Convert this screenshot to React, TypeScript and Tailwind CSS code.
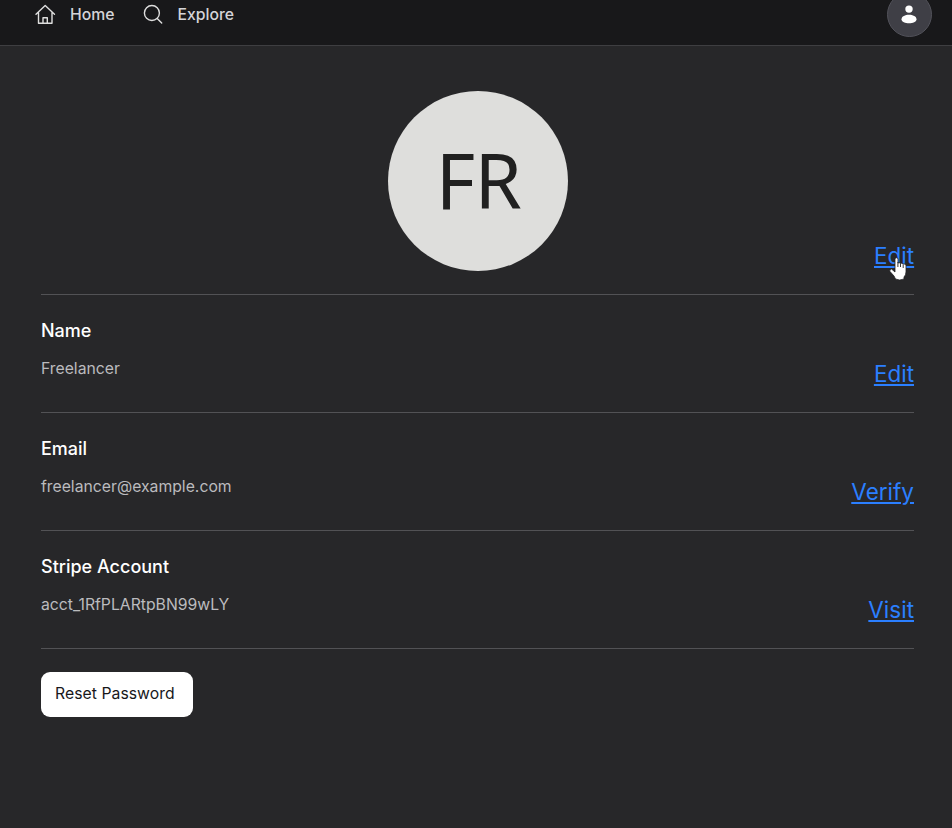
import React from "react";

type RowProps = { title: string; value: string; action: string };

function ActionLink({ label }: { label: string }) {
  return (
    <a className="cursor-pointer text-[22.5px] leading-[32px] text-[#2b7fff] underline">{label}</a>
  );
}

function Row({ title, value, action }: RowProps) {
  return (
    <section className="flex h-[118px] justify-between border-b border-[#525255]">
      <div className="pt-[22px]">
        <h2 className="text-[18px] leading-[27px] font-medium text-white">{title}</h2>
        <p className="mt-[14px] text-[15.75px] leading-[22px] text-[#bbbbbe]">{value}</p>
      </div>
      <div className="pt-[63px]">
        <ActionLink label={action} />
      </div>
    </section>
  );
}

function HomeIcon() {
  return (
    <svg className="h-[22px] w-[22px]" viewBox="0 0 22 22" fill="none" stroke="#dedede" strokeWidth="1.4" strokeLinecap="round" strokeLinejoin="round">
      <path d="M2 10.300 11.200 1.500l9.300 8.800M4.500 8.500V19.300h13.500V8.500M9 19.100v-5.400h4.300v5.400" />
    </svg>
  );
}

function SearchIcon() {
  return (
    <svg className="h-[22px] w-[22px]" viewBox="0 0 22 22" fill="none" stroke="#dedede" strokeWidth="1.4" strokeLinecap="round">
      <circle cx="9.900" cy="9" r="7.500" />
      <path d="m15.200 14.500 4.500 4.600" />
    </svg>
  );
}

function HandPointer() {
  return (
    <svg className="pointer-events-none absolute top-[17px] left-[15px] h-[24px] w-[18px]" viewBox="0 0 18 24">
      <path
        d="M6 1.500Q7.500 0 9 1.500V6Q10.300 5.200 11.500 6.500Q12.800 5.700 14 7Q15.500 6.500 17 8V15Q17 18 15 20V22Q10.500 24 6.500 22L5 19 1 14.500Q0 12.500 2.500 12L6 15Z"
        fill="#fff"
        stroke="#222224"
        strokeWidth=".8"
      />
      <path d="M8.900 5v5M11.500 6.500V10M14.200 7.500V11" stroke="#222224" strokeWidth=".9" />
    </svg>
  );
}

export default function App() {
  return (
    <div className="h-[828px] w-full overflow-hidden bg-[#272729] font-['Inter',sans-serif]">
      <header className="flex h-[46px] justify-between border-b border-[#3e3e41] bg-[#18181a] pr-[20px] pl-[34px]">
        <nav className="flex h-[28px] items-center text-[15.75px] font-medium text-[#d4d4d8]">
          <a className="flex items-center gap-[14px] pt-[1px]">
            <HomeIcon />
            <span>Home</span>
          </a>
          <a className="ml-[28px] flex items-center gap-[13px] pt-[1px]">
            <SearchIcon />
            <span>Explore</span>
          </a>
        </nav>
        <button className="-mt-[8px] flex h-[45px] w-[45px] items-center justify-center rounded-full border border-[#52525a] bg-[#3f3f46]">
          <svg className="mr-[1px] h-[20px] w-[16px]" viewBox="0 0 16 20" fill="#fff">
            <circle cx="8" cy="4.100" r="3.700" />
            <path d="M.5 14.200C.5 8.200 15.500 8.200 15.500 14.200C15.500 19.600.5 19.600.5 14.200Z" />
          </svg>
        </button>
      </header>
      <main className="pt-[45px] pr-[38px] pl-[41px]">
        <section className="grid h-[204px] grid-cols-[1fr_180px_1fr] border-b border-[#525255]">
          <div />
          <div className="flex h-[180px] items-center justify-center rounded-full bg-[#dededc] pb-[3px] pl-[2px] font-['Noto_Sans',sans-serif] text-[76px] tracking-[-0.5px] text-[#202020]">
            FR
          </div>
          <div className="pt-[149px] text-right">
            <span className="relative inline-block w-[40px]">
              <ActionLink label="Edit" />
              <HandPointer />
            </span>
          </div>
        </section>
        <Row title="Name" value="Freelancer" action="Edit" />
        <Row title="Email" value="freelancer@example.com" action="Verify" />
        <Row title="Stripe Account" value="acct_1RfPLARtpBN99wLY" action="Visit" />
        <button className="mt-[23px] flex h-[45px] w-[152px] items-center rounded-[9px] bg-white pb-[2px] pl-[14px] text-[15.75px] tracking-[0.04px] text-[#18181b]">
          Reset Password
        </button>
      </main>
    </div>
  );
}
